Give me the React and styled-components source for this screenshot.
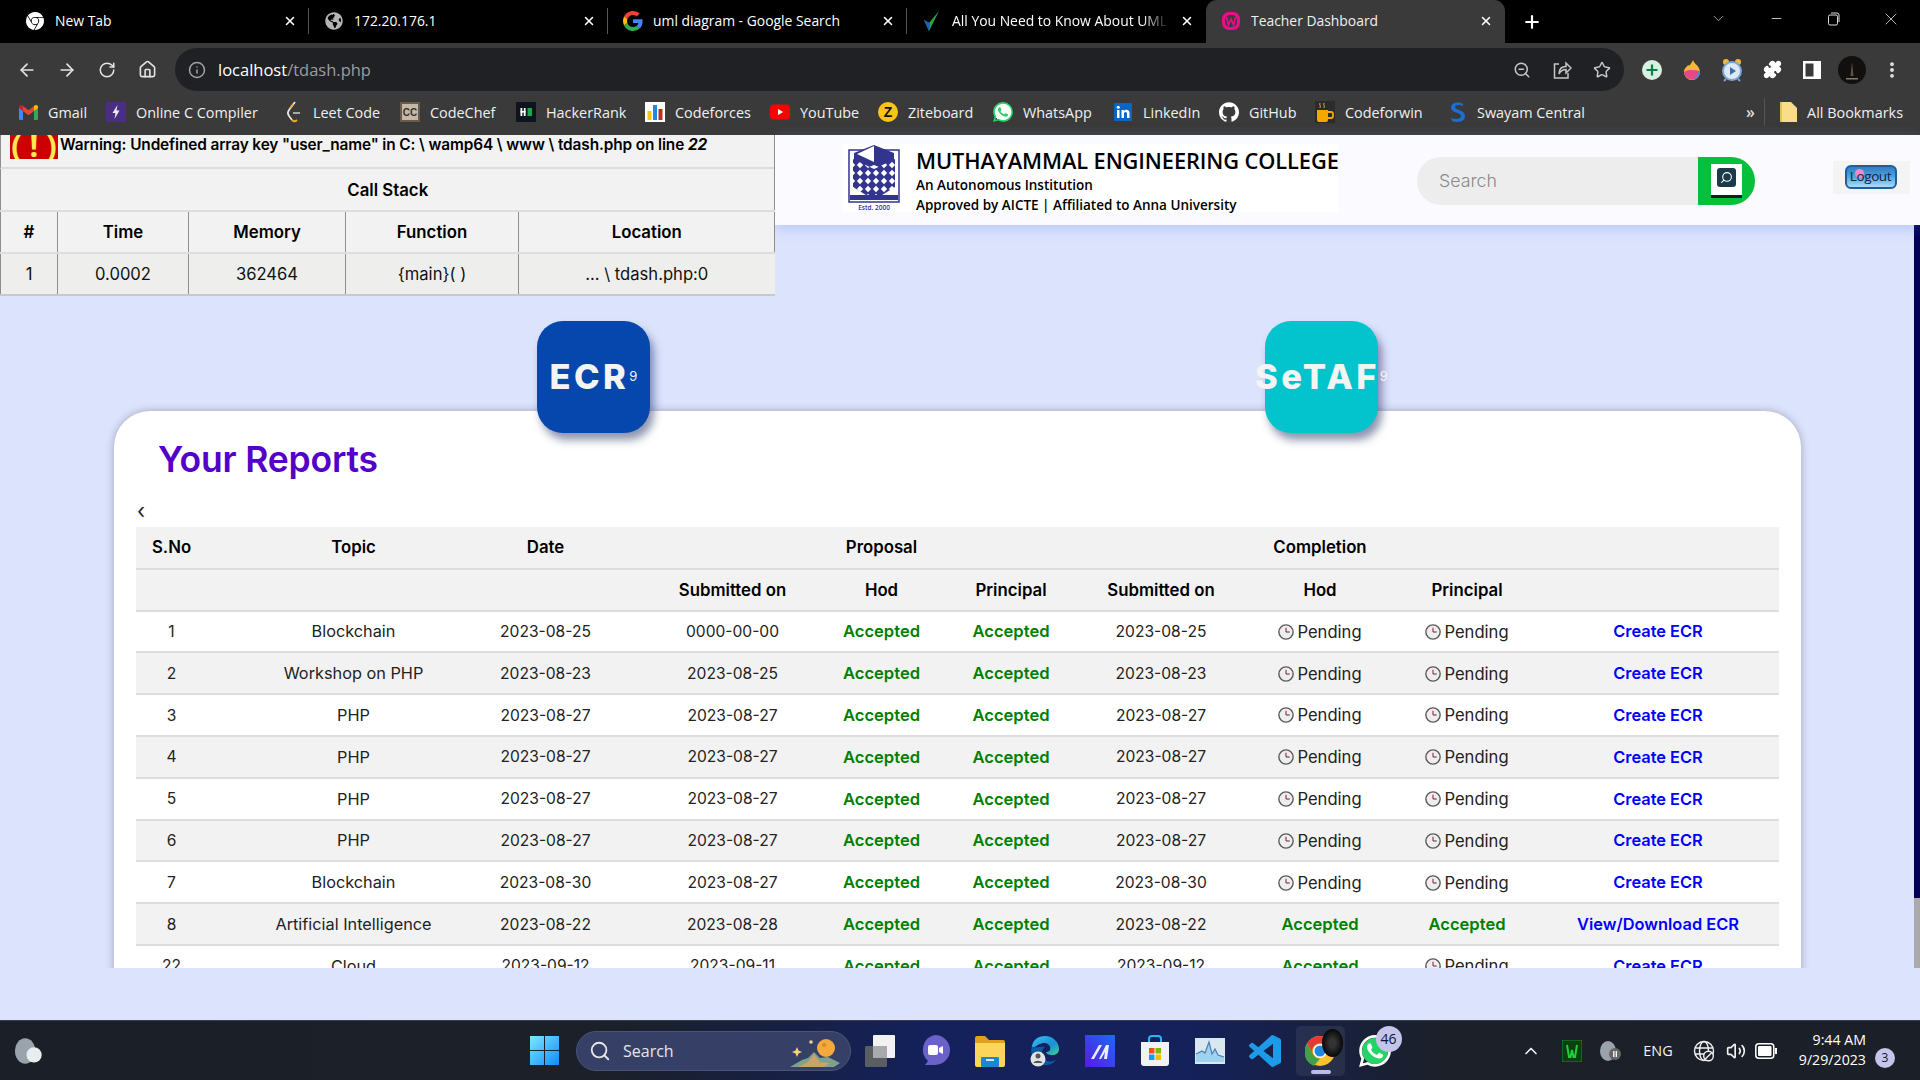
import React from 'react';
import styled, { createGlobalStyle } from 'styled-components';
import { ArrowLeft, ArrowRight, RotateCw, Home, Info, ZoomOut, Star, Puzzle, X, Plus, Minus, ChevronDown, ChevronUp, EllipsisVertical, Search, Volume2 } from 'lucide-react';
import { SiGooglechrome, SiWhatsapp, SiGithub } from 'react-icons/si';
import { FaGlobeAmericas } from 'react-icons/fa';

const UI = '"Open Sans", "Noto Sans", sans-serif';
const PAGE = 'Inter, "Noto Sans", sans-serif';

const Global = createGlobalStyle`
  html, body { margin: 0; padding: 0; overflow: hidden; background: #dce3fc; }
  * { box-sizing: border-box; }
`;

const Shell = styled.div`
  width: 1920px; height: 1080px; display: flex; flex-direction: column; overflow: hidden; font-family: ${PAGE};
`;

/* ---------- browser chrome ---------- */
const TabStrip = styled.div`
  height: 43px; background: #000; display: flex; align-items: stretch; padding-left: 10px; color: #fff; font-family: ${UI};
`;
const Tab = styled.div`
  position: relative; width: 299px; display: flex; align-items: center; padding: 0 0 2px 15px; gap: 10px; font-size: 13.9px;
  background: ${p => (p.$active ? '#3a3a3a' : 'transparent')};
  border-radius: ${p => (p.$active ? '11px 11px 0 0' : '0')};
  color: ${p => (p.$active ? '#f0f0f0' : '#fff')};
  &::after {
    content: ''; position: absolute; right: 0; top: 8px; height: 26px; width: 1px;
    background: ${p => (p.$sep ? '#555' : 'transparent')};
  }
`;
const Favicon = styled.span`
  width: 20px; height: 20px; flex: none; display: flex; align-items: center; justify-content: center; color: ${p => p.$color || '#fff'};
`;
const TabLabel = styled.span`
  flex: 1; white-space: nowrap; overflow: hidden;
  ${p => p.$fade && 'mask-image: linear-gradient(90deg, #000 88%, transparent 100%);'}
`;
const TabClose = styled.span`
  width: 16px; margin-right: 11px; display: flex; justify-content: center; color: #fff; flex: none;
`;
const NewTab = styled.div`
  margin-left: 17px; display: flex; align-items: center; color: #fff;
`;
const WinControls = styled.div`
  margin-left: auto; display: flex; color: #ddd; padding-right: 0;
`;
const WinBtn = styled.div`
  width: 57.5px; display: flex; align-items: center; justify-content: center; padding-bottom: 6px;
`;
const Toolbar = styled.div`
  height: 48px; background: #3a3a3a; display: flex; padding: 5px 0 0 7px; color: #e4e4e4;
`;
const ToolBtn = styled.div`
  width: 40px; height: 43px; flex: none; display: flex; align-items: center; justify-content: center;
`;
const Omnibox = styled.div`
  width: 1449px; height: 43px; margin: 0 8px; background: #202124; border-radius: 22px; display: flex; align-items: center;
  padding: 0 2px 0 13px; color: #c4c7c5; font-family: ${UI};
`;
const UrlIcon = styled.span`
  width: 18px; display: flex; margin-right: 12px; color: #a0a3a5;
`;
const UrlHost = styled.span`
  font-size: 16.5px; color: #fff;
`;
const UrlPath = styled.span`
  font-size: 16.5px; color: #9a9da0;
`;
const OmniRight = styled.div`
  margin-left: auto; display: flex;
`;
const Bookmarks = styled.div`
  height: 44px; background: #3a3a3a; display: flex; align-items: center; padding: 0 0 2px 18px; color: #f0f0f0; font-family: ${UI}; font-size: 14.4px;
`;
const Bookmark = styled.div`
  width: ${p => p.$w}px; flex: none; display: flex; align-items: center; gap: 10px; white-space: nowrap;
`;
const BmIcon = styled.span`
  width: 20px; height: 20px; flex: none; display: flex; align-items: center; justify-content: center; border-radius: 50%;
  ${p => p.$disc && 'background: radial-gradient(#fff 62%, transparent 64%);'}
`;
const BmMore = styled.div`
  margin-left: auto; display: flex; align-items: center; padding-right: 17px; white-space: nowrap;
`;
const BmChevrons = styled.span`
  width: 18px; font-size: 16px; font-weight: 600; color: #ddd;
`;
const BmSep = styled.span`
  width: 1px; height: 28px; background: #555; margin-right: 14px;
`;
const AllBm = styled.span`
  margin-left: 9px;
`;

/* ---------- page ---------- */
const Page = styled.div`
  position: relative; flex: 1; background: #dce3fc; display: flex; flex-direction: column; min-height: 0;
`;
const TopRow = styled.div`
  height: 160px; display: flex; align-items: flex-start; flex: none; position: relative; z-index: 3;
`;
const Debug = styled.div`
  width: 775px; flex: none; position: relative; z-index: 2; background: #f2f2f2;
  border-right: 1px solid #8e8e8e; font-family: ${PAGE}; color: #000;
`;
const WarnRow = styled.div`
  height: 34px; display: flex; align-items: flex-start; padding-left: 9px; overflow: hidden; border-left: 1px solid #8e8e8e;
  border-bottom: 2px solid #ddd; font-weight: 600; font-size: 15.4px; letter-spacing: -.12px; white-space: nowrap;
`;
const WarnIcon = styled.span`
  width: 48px; height: 24px; background: #cc0000; color: #fce94f; font-size: 31px; font-weight: 700; line-height: 20px;
  display: flex; justify-content: center; flex: none; margin-right: 2px; overflow: hidden; font-family: ${UI}; white-space: pre;
`;
const WarnText = styled.span`
  line-height: 18px; padding-top: 1px;
  i { font-weight: 700; }
`;
const DebugTable = styled.table`
  width: 774px; border-collapse: collapse; table-layout: fixed; font-size: 16.6px; text-align: center;
  th, td { height: 42px; padding: 0; border-bottom: 2px solid #ddd; border-left: 1px solid #8e8e8e; }
  th { font-weight: 600; font-size: 16.8px; }
  td { background: #eeeeec; border-bottom-color: #c9c9c9; font-weight: 400; color: #111; }
`;
const Header = styled.header`
  flex: 1; height: 90px; background: #fbfbff; display: flex; align-items: center; position: relative;
  box-shadow: 0 3px 12px rgba(110, 140, 245, .35);
`;
const Brand = styled.div`
  margin-left: 68px; width: 495px; height: 68px; background: #fff; display: flex; align-items: flex-start; padding: 1px 0 0 5px; margin-top: -4px;
`;
const Crest = styled.svg`
  width: 52px; height: 67px; flex: none; margin-right: 16px;
`;
const BrandText = styled.div`
  display: flex; flex-direction: column; font-family: ${UI}; color: #000; white-space: nowrap;
`;
const BrandTitle = styled.div`
  font-size: 21.8px; font-weight: 600; line-height: 30px; letter-spacing: -.1px; margin-top: 1px; margin-bottom: -1px;
`;
const BrandSub = styled.div`
  font-size: 13.5px; font-weight: 600; line-height: 20px;
`;
const SearchBox = styled.div`
  margin-left: 79px; width: 338px; height: 48px; border-radius: 24px; background: #ededed; overflow: hidden; display: flex; flex: none; margin-top: 1px;
`;
const SearchHint = styled.div`
  flex: 1; padding-left: 22px; font-size: 17.8px; color: #8a8a8a; display: flex; align-items: center; font-weight: 300;
`;
const SearchGo = styled.div`
  width: 57px; background: #04c03a; display: flex; align-items: center; padding-left: 13px;
`;
const SearchIconBox = styled.div`
  width: 31px; height: 34px; background: #fff; border-bottom: 3px solid #1a1a2a; display: flex; align-items: center; justify-content: center; padding-bottom: 3px;
`;
const SearchGlyph = styled.div`
  width: 19px; height: 19px; border-radius: 3px; background: #1b3a4b; color: #fff; display: flex; align-items: center; justify-content: center;
  svg { transform: scaleX(-1); }
`;
const LogoutBox = styled.div`
  margin-left: 78px; width: 77px; height: 33px; background: #f4f4f4; display: flex; align-items: center; justify-content: center; padding-right: 2px; margin-top: -6px;
`;
const LogoutBtn = styled.div`
  position: relative; width: 52px; height: 24px; border-radius: 6px; border: 2px solid #1d5f9c;
  background: linear-gradient(#2f7dc4 0%, #4f9edc 45%, #a9dcff 100%); color: #10233a; font-size: 13.5px; text-align: center; line-height: 19px;
  font-family: ${UI}; letter-spacing: -.4px;
  &::before { content: ''; position: absolute; left: 8px; top: 2px; width: 9px; height: 9px; border-radius: 50%; background: #f08ac8; }
  span { position: relative; }
`;
const ScrollRegion = styled.div`
  height: 673px; flex: none; overflow: hidden; position: relative; padding-top: 26px;
`;
const TileRow = styled.div`
  display: flex; padding-left: 537px; gap: 615px; position: relative; z-index: 2; height: 112px; margin-bottom: -22px;
`;
const Tile = styled.div`
  width: 113px; height: 112px; border-radius: 26px; background: ${p => p.$bg}; color: #f4f4f4; display: flex; align-items: center; justify-content: center;
  box-shadow: 4px 7px 9px rgba(50, 60, 110, .55); font-size: 34.5px; font-weight: 800; letter-spacing: 3.4px; white-space: nowrap; padding-bottom: 1px;
  sup { font-size: 13px; font-weight: 400; letter-spacing: 0; margin-left: 0; position: relative; top: -1px; vertical-align: baseline; }
`;
const Card = styled.section`
  margin-left: 114px; width: 1687px; background: #fff; border-radius: 36px 36px 0 0; padding: 0 22px; box-shadow: 0 0 9px rgba(0, 0, 0, .28); height: 700px;
`;
const Title = styled.h1`
  margin: 0 0 0 22px; height: 88px; display: flex; align-items: center; font-size: 35.5px; font-weight: 600; color: #5500c8; letter-spacing: -.2px; padding-top: 8px;
`;
const Stray = styled.div`
  height: 28px; font-size: 21px; color: #222; padding: 2px 0 0 1px; line-height: 20px;
`;
const COLS = [126, 188, 190, 168, 138, 139, 155, 153, 169, 217];
const NUDGE = [-28, -3, 1, 9, 5, -5, -2, 4, -11, -13];
const nudges = NUDGE.map((d, i) =>
  `& > :nth-child(${i + 1}) { ${d > 0 ? `padding-left:${2 * d}px;` : `padding-right:${-2 * d}px;`} }`).join('\n');
const Reports = styled.table`
  width: 1643px; table-layout: fixed; border-collapse: collapse; font-size: 15.6px; text-align: center; color: #222;
`;
const Row = styled.tr`
  background: ${p => (p.$shade ? '#f2f2f2' : '#fff')};
  ${nudges}
  th, td { height: 41.8px; padding-top: 0; padding-bottom: 0; border-bottom: 2px solid #ddd; white-space: nowrap; font-weight: 400; }
  th { font-weight: 600; color: #000; font-size: 16.8px; }
  td:nth-child(2) { font-size: 16.3px; }
`;
const Ok = styled.span`
  color: #008000; font-weight: 600; font-size: 16.6px;
`;
const ActionLink = styled.a`
  color: #0000ff; font-weight: 600; font-size: 16.4px;
`;
const Pend = styled.span`
  display: inline-flex; align-items: center; gap: 3px; color: #222; font-size: 16.6px; line-height: 20px; vertical-align: middle;
`;
const Scrollbar = styled.div`
  position: absolute; right: 0; top: 90px; height: 743px; width: 6px; background: #aaa; z-index: 1;
  &::before { content: ''; display: block; height: 673px; background: #000058; }
`;

/* ---------- taskbar ---------- */
const Taskbar = styled.div`
  height: 60px; flex: none; display: grid; grid-template-columns: 530px auto 1fr auto; align-items: center; color: #fff; font-family: ${UI};
  border-top: 1px solid #3a3d48;
  background: linear-gradient(90deg, #1b2028 0%, #1b2029 32%, #14215a 48%, #14215a 62%, #1b2029 75%, #1b2028 100%);
`;
const Weather = styled.div`
  padding-left: 15px; display: flex;
`;
const TaskCenter = styled.div`
  display: flex; align-items: center;
`;
const WinLogo = styled.svg`
  width: 29px; height: 29px; margin-right: 17px; flex: none;
`;
const TaskSearch = styled.div`
  width: 275px; height: 40px; border-radius: 20px; background: #364067; border: 1px solid #4a5478; display: flex; align-items: center; padding-left: 12px; gap: 12px;
  font-size: 16px; color: #e6e6e6; margin-right: 1.5px; position: relative;
`;
const SearchArt = styled.svg`
  position: absolute; right: 8px; top: 3px; width: 54px; height: 34px;
`;
const TaskItem = styled.div`
  position: relative; width: 55px; height: 50px; flex: none; display: flex; align-items: center; justify-content: center; border-radius: 5px;
  ${p => p.$active && 'background: rgba(255,255,255,.07); width: 49px; margin: 0 3px;'}
`;
const WaDisc = styled.span`
  position: absolute; left: 14px; top: 12px; width: 26px; height: 26px; border-radius: 50%; background: #25d366;
`;
const WaGlyph = styled.span`
  position: relative; display: flex;
`;
const RunDot = styled.span`
  position: absolute; bottom: 2px; left: 15px; width: 20px; height: 4px; border-radius: 2px; background: #bdbde8;
`;
const Badge = styled.span`
  position: absolute; right: ${p => p.$r}px; top: ${p => p.$t}px; min-width: ${p => p.$s}px; height: ${p => p.$s}px; border-radius: 50%; background: #c4c4ec; color: #14142a;
  font-size: 14px; display: flex; align-items: center; justify-content: center;
`;
const MiniAvatar = styled.span`
  position: absolute; right: 2px; top: 3px; width: 21px; height: 28px; border-radius: 50%; background: radial-gradient(#333 20%, #080808 70%);
`;
const Tray = styled.div`
  grid-column: 4; display: flex; align-items: center; padding-right: 18px;
`;
const TrayItem = styled.div`
  width: ${p => p.$w}px; flex: none; display: flex; align-items: center; justify-content: center; font-size: 14.4px; color: #f2f2f2;
`;
const Clock = styled.div`
  width: 85px; flex: none; text-align: right; font-size: 14.2px; line-height: 20px; white-space: nowrap; padding: 0 2px 2px 0;
`;
const NotifyBadge = styled.div`
  width: 34px; flex: none; display: flex; justify-content: center; padding-top: 14px;
  span { width: 20px; height: 20px; border-radius: 50%; background: #c4c4ec; color: #14142a; font-size: 12px; display: flex; align-items: center; justify-content: center; }
`;

/* ---------- drawn icons ---------- */
const GoogleG = ({ s = 20 }) => (
  <svg width={s} height={s} viewBox="0 0 48 48">
    <path fill="#EA4335" d="M24 9.5c3.54 0 6.71 1.22 9.21 3.6l6.85-6.85C35.9 2.38 30.47 0 24 0 14.62 0 6.51 5.38 2.56 13.22l7.98 6.19C12.43 13.72 17.74 9.5 24 9.5z" />
    <path fill="#4285F4" d="M46.98 24.55c0-1.57-.15-3.09-.38-4.55H24v9.02h12.94c-.58 2.96-2.26 5.48-4.78 7.18l7.73 6c4.51-4.18 7.09-10.36 7.09-17.65z" />
    <path fill="#FBBC05" d="M10.53 28.59c-.48-1.45-.76-2.99-.76-4.59s.27-3.14.76-4.59l-7.98-6.19C.92 16.46 0 20.12 0 24c0 3.88.92 7.54 2.56 10.78l7.97-6.19z" />
    <path fill="#34A853" d="M24 48c6.48 0 11.93-2.13 15.89-5.81l-7.73-6c-2.15 1.45-4.92 2.3-8.16 2.3-6.26 0-11.57-4.22-13.47-9.91l-7.98 6.19C6.51 42.62 14.62 48 24 48z" />
  </svg>
);
const CheckFav = () => (
  <svg width="20" height="22" viewBox="0 0 20 22"><path d="M2 10l5 11L17 1 7 13z" fill="#27a844" /><path d="M2 10l5 11 1-8z" fill="#1b5fb0" /></svg>
);
const WampFav = () => (
  <svg width="20" height="20" viewBox="0 0 20 20">
    <rect x="1" y="1" width="18" height="18" rx="7" fill="#ec0c8c" />
    <rect x="4" y="4" width="12" height="12" rx="5" fill="#3a3a3a" />
    <path d="M5.500 6l2 8 2.500-6 2.500 6 2-8" stroke="#ec0c8c" strokeWidth="1.600" fill="none" />
  </svg>
);
const Gmail = () => (
  <svg width="19" height="15" viewBox="0 0 19 15">
    <path d="M0 2v11.500A1.500 1.500 0 0 0 1.500 15H4V6z" fill="#4285f4" />
    <path d="M19 2v11.500a1.500 1.500 0 0 1-1.500 1.500H15V6z" fill="#34a853" />
    <path d="M15 1v5l4-3V2c0-1.800-2-2.500-3-1.700z" fill="#fbbc04" />
    <path d="M4 6V1l5.500 4.200L15 1v5l-5.500 4.200z" fill="#ea4335" />
    <path d="M0 2v1l4 3V1L3 .3C2 -.5 0 .2 0 2z" fill="#c5221f" />
  </svg>
);
const Bolt = () => (
  <svg width="20" height="20" viewBox="0 0 20 20"><rect width="20" height="20" fill="#4b2e83" /><path d="M11.500 3L6.500 11h3l-1 6 5-8.500h-3z" fill="#eee" /></svg>
);
const Leet = () => (
  <svg width="20" height="22" viewBox="0 0 20 22" fill="none">
    <path d="M12 1L6 9c-1.500 2-1.500 4 0 6l3 4" stroke="#e8e8e8" strokeWidth="1.700" />
    <path d="M9 19c2 2 3.500 1.500 5 0" stroke="#f5a623" strokeWidth="1.800" />
    <path d="M7 7l3-4" stroke="#f5a623" strokeWidth="1.500" />
    <path d="M10 12h7" stroke="#b5b5b5" strokeWidth="1.800" />
  </svg>
);
const ChefIcon = () => (
  <svg width="20" height="20" viewBox="0 0 20 20">
    <rect width="20" height="20" rx="1" fill="#6b5b4b" /><rect x="2" y="2" width="16" height="16" fill="#c4b9a8" />
    <text x="10" y="14" fontSize="10" fontWeight="700" textAnchor="middle" fill="#3a3128" fontFamily="Liberation Sans">CC</text>
  </svg>
);
const HR = () => (
  <svg width="20" height="20" viewBox="0 0 20 20">
    <rect width="20" height="20" rx="1" fill="#0e141e" />
    <rect x="4.500" y="6" width="1.800" height="8" fill="#fff" /><rect x="7.800" y="6" width="1.800" height="8" fill="#fff" /><rect x="4.500" y="9" width="5" height="1.600" fill="#fff" />
    <rect x="11.500" y="6" width="4.500" height="8" fill="#1ba94c" />
  </svg>
);
const CF = () => (
  <svg width="20" height="20" viewBox="0 0 20 20">
    <rect width="20" height="20" fill="#fff" />
    <rect x="2.500" y="9" width="4" height="9" fill="#f5c518" /><rect x="8" y="3" width="4" height="15" fill="#1e88e5" /><rect x="13.500" y="7" width="4" height="11" fill="#c62828" />
  </svg>
);
const YT = () => (
  <svg width="20" height="20" viewBox="0 0 20 20"><rect y="2.500" width="20" height="15" rx="4" fill="#f00" /><path d="M8 7l5 3-5 3z" fill="#fff" /></svg>
);
const Zite = () => (
  <svg width="20" height="20" viewBox="0 0 20 20">
    <circle cx="10" cy="10" r="10" fill="#fcc419" />
    <text x="10" y="15" fontSize="14" fontWeight="800" textAnchor="middle" fill="#111" fontFamily="Liberation Sans">Z</text>
  </svg>
);
const LinkedIn = () => (
  <svg width="18" height="18" viewBox="0 0 18 18">
    <rect width="18" height="18" rx="1" fill="#0a66c2" />
    <rect x="3" y="7" width="2.500" height="8" fill="#fff" /><circle cx="4.250" cy="4.300" r="1.500" fill="#fff" />
    <path d="M7.500 7H10v1.200C10.500 7.300 11.500 6.800 12.500 6.800c2 0 3 1.300 3 3.500V15H13v-4.200c0-1.100-.5-1.800-1.400-1.800S10 9.700 10 10.800V15H7.500z" fill="#fff" />
  </svg>
);
const Cup = () => (
  <svg width="20" height="22" viewBox="0 0 20 22">
    <rect width="20" height="22" fill="#2b2b2b" />
    <path d="M2 9h11v10a2 2 0 0 1-2 2H4a2 2 0 0 1-2-2z" fill="#f7a600" />
    <path d="M13 11h3a2 2 0 0 1 2 2v2a2 2 0 0 1-2 2h-3" fill="none" stroke="#f7a600" strokeWidth="1.800" />
    <path d="M5 2c-1 2 1 2 0 5M9 2c-1 2 1 2 0 5" stroke="#e8a33a" strokeWidth="1" fill="none" />
  </svg>
);
const Swayam = () => (
  <svg width="20" height="22" viewBox="0 0 20 22">
    <path d="M16 3C10 0 4 2 4 7c0 5 10 4 10 8 0 3-5 4-10 2l1 3c6 2 13 1 13-5S8 9 8 6c0-2 4-3 8-1z" fill="#1c6fd0" />
  </svg>
);
const Folder = () => (
  <svg width="19" height="22" viewBox="0 0 19 22"><path d="M1 1h11l6 6v14H1z" fill="#f9dd89" /><path d="M1 1h2v20H1z" fill="#e4c05c" /></svg>
);
const ShareOut = () => (
  <svg width="20" height="20" viewBox="0 0 20 20" fill="none" stroke="#c4c7c5" strokeWidth="1.500">
    <path d="M7 4H2.500v14H16v-5" />
    <path d="M7 14c0-5 3-7.500 7-7.500V3l5 5-5 5V9.500c-3 0-5.500 1.500-7 4.500z" fill="none" />
  </svg>
);
const ExtPlus = () => (
  <svg width="20" height="20" viewBox="0 0 20 20"><circle cx="10" cy="10" r="10" fill="#d9efe0" /><path d="M10 4.500v11M4.500 10h11" stroke="#0a7f4b" strokeWidth="2.200" /></svg>
);
const ExtDrop = () => (
  <svg width="20" height="22" viewBox="0 0 20 22">
    <path d="M11 1c1 4 7 6 7 12a8 8 0 0 1-16 0c0-4 3-5 4-7 1 1 2 1 5-5z" fill="#f7b733" />
    <path d="M2 13c4-3 10-2 16-1a8 8 0 0 1-16 1z" fill="#e8458b" />
    <path d="M18 13a8 8 0 0 1-9 8c5-1 7-4 7-9z" fill="#3a8ee6" />
  </svg>
);
const ExtClock = () => (
  <svg width="22" height="24" viewBox="0 0 22 24">
    <circle cx="5" cy="4" r="3" fill="#f3b73e" /><circle cx="17" cy="4" r="3" fill="#f3b73e" />
    <circle cx="11" cy="13" r="9" fill="#dfe9f5" stroke="#7aa7d6" strokeWidth="2" />
    <path d="M9 9l6 4-6 4z" fill="#3d6fb0" />
    <path d="M5 21l-2 2M17 21l2 2" stroke="#7aa7d6" strokeWidth="2" />
  </svg>
);
const SidePanel = () => (
  <svg width="18" height="18" viewBox="0 0 18 18"><rect width="18" height="18" fill="#fff" /><rect x="2.500" y="2.500" width="8" height="13" fill="#3a3a3a" /></svg>
);
const Avatar = () => (
  <svg width="28" height="28" viewBox="0 0 28 28">
    <circle cx="14" cy="14" r="14" fill="#12100e" />
    <path d="M14 6l1.500 14h-3z" fill="#5c5346" /><path d="M8 22h12v1.500H8z" fill="#8a7a62" />
  </svg>
);
const Crestmark = () => (
  <Crest viewBox="0 0 52 67">
    <defs>
      <pattern id="lat" width="8" height="8" patternUnits="userSpaceOnUse">
        <rect width="8" height="8" fill="#33348e" />
        <path d="M4 .8L7.200 4 4 7.200.8 4z" fill="#fff" />
      </pattern>
    </defs>
    <rect x="1" y="5" width="50" height="52" fill="none" stroke="#33348e" strokeWidth="1.500" />
    <path d="M26 0l20 8v20L26 20 6 28V8z" fill="#33348e" />
    <path d="M26 1l-17 8 17 8z" fill="#fff" />
    <path d="M5 14l21 10 21-10v28l-21 13L5 42z" fill="url(#lat)" />
    <rect x="2" y="50" width="48" height="5" fill="#33348e" />
    <text x="26" y="65" fontSize="6.500" textAnchor="middle" fill="#33348e" fontFamily="Open Sans" fontWeight="600">Estd. 2000</text>
  </Crest>
);
const ClockGlyph = () => (
  <svg width="16" height="16" viewBox="0 0 15 15">
    <circle cx="7.500" cy="7.500" r="6.700" fill="#eee" stroke="#5a5a5a" strokeWidth="1.300" />
    <path d="M7.500 3.500v4" stroke="#b01050" strokeWidth="1" /><path d="M7.500 7.500h3.500" stroke="#444" strokeWidth="1" />
  </svg>
);
const Win = () => (
  <WinLogo viewBox="0 0 29 29">
    <defs><linearGradient id="w" x1="0" y1="0" x2="1" y2="1"><stop offset="0" stopColor="#7fe6ff" /><stop offset="1" stopColor="#0f8cff" /></linearGradient></defs>
    <path d="M0 0h14v14H0zM15 0h14v14H15zM0 15h14v14H0zM15 15h14v14H15z" fill="url(#w)" />
  </WinLogo>
);
const Edge = () => (
  <svg width="30" height="32" viewBox="0 0 30 32">
    <defs><linearGradient id="e" x1="0" y1="0" x2="1" y2="1"><stop offset="0" stopColor="#35c1f1" /><stop offset=".6" stopColor="#1a8fd6" /><stop offset="1" stopColor="#3dd68c" /></linearGradient></defs>
    <path d="M15 1c8 0 14 6 14 13 0 4-3 6-7 6-3 0-6-1-6-3 3 0 5-2 4-5-1-4-6-5-10-3C5 11 1 16 2 11 3 5 8 1 15 1z" fill="url(#e)" />
    <path d="M2 11c-3 9 3 19 13 19 5 0 9-2 11-5-4 2-9 2-12-1-3-3-3-9 1-12-5-1-11 2-13-1z" fill="#0c59a4" />
    <circle cx="8" cy="24" r="7.500" fill="#dfe3e6" /><circle cx="8" cy="21" r="2.500" fill="#555" /><path d="M3.500 28c1-3 8-3 9 0z" fill="#555" />
  </svg>
);
const AppTile = () => (
  <svg width="30" height="32" viewBox="0 0 30 32">
    <defs><linearGradient id="m" x1="0" y1="1" x2="1" y2="0"><stop offset="0" stopColor="#5a18e8" /><stop offset="1" stopColor="#1a6cf0" /></linearGradient></defs>
    <rect width="30" height="32" fill="url(#m)" />
    <path d="M6 24l8-14h3l-8 14zM14 24l7-14h3l-2 14h-3l1-7-4 7z" fill="#fff" opacity=".9" />
  </svg>
);
const Store = () => (
  <svg width="30" height="32" viewBox="0 0 30 32">
    <path d="M9 8V4a3 3 0 0 1 3-3h6a3 3 0 0 1 3 3v4" stroke="#29b6f6" strokeWidth="2" fill="none" />
    <path d="M1 7h28v21a3 3 0 0 1-3 3H4a3 3 0 0 1-3-3z" fill="#f2f2f2" />
    <rect x="9" y="13" width="5.500" height="5.500" fill="#f25022" /><rect x="15.500" y="13" width="5.500" height="5.500" fill="#7fba00" />
    <rect x="9" y="19.500" width="5.500" height="5.500" fill="#00a4ef" /><rect x="15.500" y="19.500" width="5.500" height="5.500" fill="#ffb900" />
  </svg>
);
const Stocks = () => (
  <svg width="30" height="26" viewBox="0 0 30 26">
    <rect width="30" height="26" fill="#d9e7f0" />
    <path d="M1 24V16l6-3 3 2 4-11 3 12 3-5 3 6 6 2v5z" fill="#9fd2ee" />
    <path d="M1 16l6-3 3 2 4-11 3 12 3-5 3 6 6 2" stroke="#4a7fb0" strokeWidth="1.200" fill="none" />
  </svg>
);
const VSCode = () => (
  <svg width="32" height="32" viewBox="0 0 24 24">
    <path fill="#1c9be8" d="M23.15 2.587L18.21.21a1.494 1.494 0 0 0-1.705.29l-9.46 8.63-4.12-3.128a.999.999 0 0 0-1.276.057L.327 7.261A1 1 0 0 0 .326 8.74L3.899 12 .326 15.26a1 1 0 0 0 .001 1.479L1.65 17.94a.999.999 0 0 0 1.276.057l4.12-3.128 9.46 8.63a1.492 1.492 0 0 0 1.704.29l4.942-2.377A1.5 1.5 0 0 0 24 20.06V3.939a1.5 1.5 0 0 0-.85-1.352zm-5.146 14.861L10.826 12l7.178-5.448v10.896z" />
  </svg>
);
const ChromeLogo = () => (
  <svg width="30" height="30" viewBox="0 0 30 30">
    <circle cx="15" cy="15" r="15" fill="#fbc02d" />
    <path d="M15 0a15 15 0 0 1 13 7.500H15A7.500 7.500 0 0 0 8.500 19L2 7.500A15 15 0 0 1 15 0z" fill="#e53935" />
    <path d="M2 7.500L8.500 19A7.500 7.500 0 0 0 15 22.500L9 30A15 15 0 0 1 2 7.500z" fill="#43a047" />
    <circle cx="15" cy="15" r="7" fill="#fff" /><circle cx="15" cy="15" r="5.500" fill="#1e88e5" />
  </svg>
);
const Cloud = ({ dim, s = 22 }) => (
  <svg width={s} height={s} viewBox="0 0 22 22">
    <ellipse cx="8" cy="11" rx="8" ry="10" fill="#9aa3ab" />
    <circle cx="15" cy="14" r="6" fill={dim ? '#666' : '#e9edf0'} />
    {dim ? <path d="M13.800 11v6M16.300 11v6" stroke="#fff" strokeWidth="1.300" /> : null}
  </svg>
);
const TaskView = () => (
  <svg width="30" height="32" viewBox="0 0 30 32">
    <rect x="0" y="11" width="22" height="21" rx="1" fill="#5a5d62" />
    <rect x="8" y="0" width="22" height="23" rx="1" fill="#f2f2f2" />
    <rect x="8" y="11" width="14" height="12" fill="#a7a9ac" />
  </svg>
);
const Meet = () => (
  <svg width="30" height="32" viewBox="0 0 30 32">
    <path d="M15 0a15 15 0 0 1 0 30H5l3-4A15 15 0 0 1 15 0z" fill="#6a62c8" />
    <rect x="8" y="10" width="10" height="10" rx="2" fill="#fff" /><path d="M19 13l4-2v8l-4-2z" fill="#fff" />
  </svg>
);
const Files = () => (
  <svg width="30" height="32" viewBox="0 0 30 32">
    <path d="M0 3a2 2 0 0 1 2-2h8l4 4h14a2 2 0 0 1 2 2v4H0z" fill="#e0a020" />
    <path d="M0 8h30v22a2 2 0 0 1-2 2H2a2 2 0 0 1-2-2z" fill="#fcd65a" />
    <rect x="6" y="22" width="18" height="10" rx="1" fill="#1b86d6" /><rect x="11" y="24" width="8" height="2" fill="#cfe8fb" />
  </svg>
);
const GreenBox = () => (
  <svg width="20" height="22" viewBox="0 0 20 22">
    <rect width="20" height="22" fill="#0a3f10" stroke="#1a8f2a" />
    <path d="M5 5l2 12h1.500l1.500-7 1.500 7H13l2-12" stroke="#1fd03a" strokeWidth="2" fill="none" />
  </svg>
);
const NoNetGlobe = () => (
  <svg width="22" height="22" viewBox="0 0 22 22" fill="none" stroke="#f2f2f2" strokeWidth="1.400">
    <circle cx="11" cy="11" r="9.500" />
    <ellipse cx="11" cy="11" rx="4.500" ry="9.500" />
    <path d="M2 8h18M2 14h18" />
    <circle cx="15.500" cy="16" r="4.800" fill="#1b2029" />
    <path d="M12.300 19l6.400-6.200" />
  </svg>
);
const Battery = () => (
  <svg width="22" height="16" viewBox="0 0 22 16"><rect x=".8" y=".8" width="18" height="14.400" rx="3" fill="none" stroke="#fff" strokeWidth="1.500" /><rect x="3" y="3" width="13.500" height="10" rx="1" fill="#fff" /><rect x="20" y="5" width="2" height="6" fill="#fff" /></svg>
);
const SearchMoon = () => (
  <SearchArt viewBox="0 0 54 34">
    <path d="M2 32l12-7 6-2 6-6 6 6 8-1 12 6-6 4z" fill="#7ea08c" />
    <path d="M10 32l10-5 6-8 6 8 10 1-6 4z" fill="#c9a36b" />
    <circle cx="38" cy="13" r="9" fill="#f4a93c" /><circle cx="36" cy="10" r="2" fill="#dc8a20" />
    <path d="M9 12l1.500 3.500L14 17l-3.500 1.500L9 22l-1.500-3.500L4 17l3.500-1.500z" fill="#f5d27a" />
    <circle cx="23" cy="7" r="1.800" fill="#f5d27a" />
  </SearchArt>
);

/* ---------- data ---------- */
const TABS = [
  { t: 'New Tab', i: <SiGooglechrome size={18} />, sep: true },
  { t: '172.20.176.1', i: <FaGlobeAmericas size={18} color="#b5b5b5" />, sep: true },
  { t: 'uml diagram - Google Search', i: <GoogleG />, sep: true },
  { t: 'All You Need to Know About UML Diagrams', i: <CheckFav />, fade: true },
  { t: 'Teacher Dashboard', i: <WampFav />, active: true },
];
const MARKS = [
  { t: 'Gmail', w: 88, i: <Gmail /> },
  { t: 'Online C Compiler', w: 177, i: <Bolt /> },
  { t: 'Leet Code', w: 117, i: <Leet /> },
  { t: 'CodeChef', w: 116, i: <ChefIcon /> },
  { t: 'HackerRank', w: 129, i: <HR /> },
  { t: 'Codeforces', w: 125, i: <CF /> },
  { t: 'YouTube', w: 108, i: <YT /> },
  { t: 'Ziteboard', w: 115, i: <Zite /> },
  { t: 'WhatsApp', w: 120, i: <SiWhatsapp size={20} color="#25d366" />, disc: true },
  { t: 'LinkedIn', w: 106, i: <LinkedIn /> },
  { t: 'GitHub', w: 96, i: <SiGithub size={20} color="#fff" /> },
  { t: 'Codeforwin', w: 132, i: <Cup /> },
  { t: 'Swayam Central', w: 130, i: <Swayam /> },
];
const A = 'ok', P = 'pending';
const ROWS = [
  ['1', 'Blockchain', '2023-08-25', '0000-00-00', A, A, '2023-08-25', P, P, 'Create ECR'],
  ['2', 'Workshop on PHP', '2023-08-23', '2023-08-25', A, A, '2023-08-23', P, P, 'Create ECR'],
  ['3', 'PHP', '2023-08-27', '2023-08-27', A, A, '2023-08-27', P, P, 'Create ECR'],
  ['4', 'PHP', '2023-08-27', '2023-08-27', A, A, '2023-08-27', P, P, 'Create ECR'],
  ['5', 'PHP', '2023-08-27', '2023-08-27', A, A, '2023-08-27', P, P, 'Create ECR'],
  ['6', 'PHP', '2023-08-27', '2023-08-27', A, A, '2023-08-27', P, P, 'Create ECR'],
  ['7', 'Blockchain', '2023-08-30', '2023-08-27', A, A, '2023-08-30', P, P, 'Create ECR'],
  ['8', 'Artificial Intelligence', '2023-08-22', '2023-08-28', A, A, '2023-08-22', A, A, 'View/Download ECR'],
  ['22', 'Cloud', '2023-09-12', '2023-09-11', A, A, '2023-09-12', A, P, 'Create ECR'],
];
const cell = (v, i) => {
  if (v === A) return <td key={i}><Ok>Accepted</Ok></td>;
  if (v === P) return <td key={i}><Pend><ClockGlyph />Pending</Pend></td>;
  if (i === 9) return <td key={i}><ActionLink>{v}</ActionLink></td>;
  return <td key={i}>{v}</td>;
};

export default function App() {
  return (
    <Shell>
      <Global />
      <TabStrip>
        {TABS.map(t => (
          <Tab key={t.t} $active={t.active} $sep={t.sep}>
            <Favicon>{t.i}</Favicon>
            <TabLabel $fade={t.fade}>{t.t}</TabLabel>
            <TabClose><X size={14} strokeWidth={2.6} /></TabClose>
          </Tab>
        ))}
        <NewTab><Plus size={20} strokeWidth={2.6} /></NewTab>
        <WinControls>
          <WinBtn><ChevronDown size={17} strokeWidth={1} /></WinBtn>
          <WinBtn><Minus size={15} strokeWidth={1.4} /></WinBtn>
          <WinBtn><svg width="14" height="14" viewBox="0 0 14 14" fill="none" stroke="#ddd"><rect x="1.500" y="3" width="9" height="10" rx="1.500" /><path d="M4 1h6a2 2 0 0 1 2 2v7" /></svg></WinBtn>
          <WinBtn><X size={20} strokeWidth={1} /></WinBtn>
        </WinControls>
      </TabStrip>
      <Toolbar>
        <ToolBtn><ArrowLeft size={20} /></ToolBtn>
        <ToolBtn><ArrowRight size={20} /></ToolBtn>
        <ToolBtn><RotateCw size={18} /></ToolBtn>
        <ToolBtn><Home size={19} /></ToolBtn>
        <Omnibox>
          <UrlIcon><Info size={18} /></UrlIcon>
          <UrlHost>localhost</UrlHost><UrlPath>/tdash.php</UrlPath>
          <OmniRight>
            <ToolBtn><ZoomOut size={18} /></ToolBtn>
            <ToolBtn><ShareOut /></ToolBtn>
            <ToolBtn><Star size={18} /></ToolBtn>
          </OmniRight>
        </Omnibox>
        <ToolBtn><ExtPlus /></ToolBtn>
        <ToolBtn><ExtDrop /></ToolBtn>
        <ToolBtn><ExtClock /></ToolBtn>
        <ToolBtn><Puzzle size={19} fill="#fff" color="#fff" /></ToolBtn>
        <ToolBtn><SidePanel /></ToolBtn>
        <ToolBtn><Avatar /></ToolBtn>
        <ToolBtn><EllipsisVertical size={20} strokeWidth={2.6} /></ToolBtn>
      </Toolbar>
      <Bookmarks>
        {MARKS.map(m => (
          <Bookmark key={m.t} $w={m.w}><BmIcon $disc={m.disc}>{m.i}</BmIcon>{m.t}</Bookmark>
        ))}
        <BmMore>
          <BmChevrons>»</BmChevrons>
          <BmSep />
          <Folder />
          <AllBm>All Bookmarks</AllBm>
        </BmMore>
      </Bookmarks>

      <Page>
        <TopRow>
          <Debug>
            <WarnRow>
              <WarnIcon>( ! )</WarnIcon>
              <WarnText>Warning: Undefined array key "user_name" in C: \ wamp64 \ www \ tdash.php on line <i>22</i></WarnText>
            </WarnRow>
            <DebugTable>
              <colgroup><col width="57" /><col width="131" /><col width="157" /><col width="173" /><col width="256" /></colgroup>
              <thead>
                <tr><th colSpan={5}>Call Stack</th></tr>
                <tr><th>#</th><th>Time</th><th>Memory</th><th>Function</th><th>Location</th></tr>
              </thead>
              <tbody>
                <tr><td>1</td><td>0.0002</td><td>362464</td><td>{'{main}( )'}</td><td>... \ tdash.php:0</td></tr>
              </tbody>
            </DebugTable>
          </Debug>
          <Header>
            <Brand>
              <Crestmark />
              <BrandText>
                <BrandTitle>MUTHAYAMMAL ENGINEERING COLLEGE</BrandTitle>
                <BrandSub>An Autonomous Institution</BrandSub>
                <BrandSub>Approved by AICTE | Affiliated to Anna University</BrandSub>
              </BrandText>
            </Brand>
            <SearchBox>
              <SearchHint>Search</SearchHint>
              <SearchGo><SearchIconBox><SearchGlyph><Search size={13} /></SearchGlyph></SearchIconBox></SearchGo>
            </SearchBox>
            <LogoutBox><LogoutBtn><span>Logout</span></LogoutBtn></LogoutBox>
          </Header>
        </TopRow>
        <Scrollbar />
        <ScrollRegion>
          <TileRow>
            <Tile $bg="#0547ad">ECR<sup>9</sup></Tile>
            <Tile $bg="#03c4cd">SeTAF<sup>9</sup></Tile>
          </TileRow>
          <Card>
            <Title>Your Reports</Title>
            <Stray>‹</Stray>
            <Reports>
              <colgroup>{COLS.map((w, i) => <col key={i} width={w} />)}</colgroup>
              <thead>
                <Row $shade>
                  <th>S.No</th><th>Topic</th><th>Date</th><th /><th>Proposal</th><th /><th /><th>Completion</th><th /><th />
                </Row>
                <Row $shade>
                  <th /><th /><th /><th>Submitted on</th><th>Hod</th><th>Principal</th><th>Submitted on</th><th>Hod</th><th>Principal</th><th />
                </Row>
              </thead>
              <tbody>
                {ROWS.map((r, k) => (
                  <Row key={k} $shade={k % 2 === 1}>{r.map(cell)}</Row>
                ))}
              </tbody>
            </Reports>
          </Card>
        </ScrollRegion>
      </Page>

      <Taskbar>
        <Weather><Cloud s={28} /></Weather>
        <TaskCenter>
          <Win />
          <TaskSearch>
            <Search size={22} />Search
            <SearchMoon />
          </TaskSearch>
          <TaskItem><TaskView /></TaskItem>
          <TaskItem><Meet /></TaskItem>
          <TaskItem><Files /></TaskItem>
          <TaskItem><Edge /></TaskItem>
          <TaskItem><AppTile /></TaskItem>
          <TaskItem><Store /></TaskItem>
          <TaskItem><Stocks /></TaskItem>
          <TaskItem><VSCode /></TaskItem>
          <TaskItem $active><ChromeLogo /><MiniAvatar /><RunDot /></TaskItem>
          <TaskItem><WaDisc /><WaGlyph><SiWhatsapp size={32} color="#fff" /></WaGlyph><Badge $r={1} $t={0} $s={26}>46</Badge></TaskItem>
        </TaskCenter>
        <Tray>
          <TrayItem $w={40}><ChevronUp size={20} strokeWidth={2} /></TrayItem>
          <TrayItem $w={41}><GreenBox /></TrayItem>
          <TrayItem $w={38}><Cloud dim /></TrayItem>
          <TrayItem $w={56}>ENG</TrayItem>
          <TrayItem $w={36}><NoNetGlobe /></TrayItem>
          <TrayItem $w={27}><Volume2 size={20} /></TrayItem>
          <TrayItem $w={34}><Battery /></TrayItem>
          <Clock>9:44 AM<br />9/29/2023</Clock>
          <NotifyBadge><span>3</span></NotifyBadge>
        </Tray>
      </Taskbar>
    </Shell>
  );
}
